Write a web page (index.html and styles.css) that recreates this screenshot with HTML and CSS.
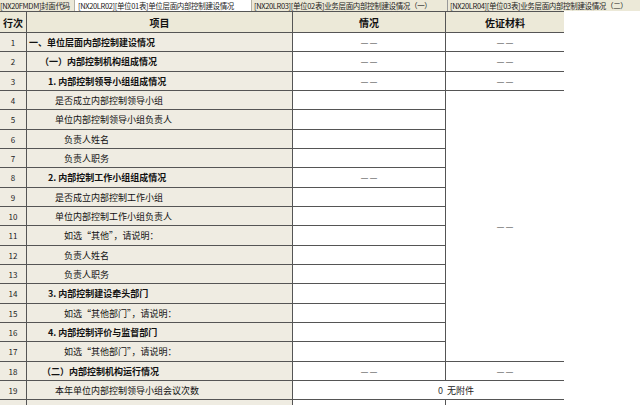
FILE: index.html
```html
<!DOCTYPE html>
<html>
<head>
<meta charset="utf-8">
<link rel="stylesheet" href="styles.css">
</head>
<body>
<div class="tabs">
  <div class="tab t1">[NX20FMDM]封面代码</div>
  <div class="tab t2 active">[NX20LR02][单位01表]单位层面内部控制建设情况</div>
  <div class="tab t3">[NX20LR03][单位02表]业务层面内部控制建设情况（一）</div>
  <div class="tab t4">[NX20LR04][单位03表]业务层面内部控制建设情况（二）</div>
</div>
<div class="sheet">
  <div class="h">行次</div><div class="h">项目</div><div class="h">情况</div><div class="h">佐证材料</div>

  <div class="n">1</div><div class="it b i0">一、单位层面内部控制建设情况</div><div class="v dash">——</div><div class="v dash">——</div>
  <div class="n">2</div><div class="it b i1">（一）内部控制机构组成情况</div><div class="v dash">——</div><div class="v dash">——</div>
  <div class="n">3</div><div class="it b i2">1. 内部控制领导小组组成情况</div><div class="v dash">——</div><div class="v dash">——</div>
  <div class="n">4</div><div class="it i3">是否成立内部控制领导小组</div><div class="v"></div><div class="v dash merged">——</div>
  <div class="n">5</div><div class="it i3">单位内部控制领导小组负责人</div><div class="v"></div>
  <div class="n">6</div><div class="it i4">负责人姓名</div><div class="v"></div>
  <div class="n">7</div><div class="it i4">负责人职务</div><div class="v"></div>
  <div class="n">8</div><div class="it b i2">2. 内部控制工作小组组成情况</div><div class="v dash">——</div>
  <div class="n">9</div><div class="it i3">是否成立内部控制工作小组</div><div class="v"></div>
  <div class="n">10</div><div class="it i3">单位内部控制工作小组负责人</div><div class="v"></div>
  <div class="n">11</div><div class="it i4">如选“其他”，请说明：</div><div class="v"></div>
  <div class="n">12</div><div class="it i4">负责人姓名</div><div class="v"></div>
  <div class="n">13</div><div class="it i4">负责人职务</div><div class="v"></div>
  <div class="n">14</div><div class="it b i2">3. 内部控制建设牵头部门</div><div class="v"></div>
  <div class="n">15</div><div class="it i4">如选“其他部门”，请说明：</div><div class="v"></div>
  <div class="n">16</div><div class="it b i2">4. 内部控制评价与监督部门</div><div class="v"></div>
  <div class="n">17</div><div class="it i4">如选“其他部门”，请说明：</div><div class="v"></div>
  <div class="n">18</div><div class="it b i1b">（二）内部控制机构运行情况</div><div class="v dash">——</div><div class="v dash">——</div>
  <div class="n">19</div><div class="it i3">本年单位内部控制领导小组会议次数</div><div class="v span2"><span class="num">0</span><span class="att">无附件</span></div>
  <div class="n"></div><div class="it"></div><div class="v"></div><div class="v"></div>
</div>
</body>
</html>
```
FILE: styles.css
```css
html, body {
  margin: 0;
  padding: 0;
  background: #ffffff;
  overflow: hidden;
  width: 640px;
  height: 405px;
}
body {
  font-family: "Noto Sans CJK SC", "Noto Sans", sans-serif;
  color: #000;
}
.tabs {
  display: flex;
  height: 11px;
  background: #ece9d8;
  overflow: hidden;
  white-space: nowrap;
  font-size: 7.5px;
  letter-spacing: -0.35px;
  line-height: 11px;
  color: #222;
}
.tab {
  overflow: hidden;
  box-sizing: border-box;
  padding-left: 2px;
}
.t1 { width: 74px; padding-left: 0; }
.t2 { width: 178px; padding-left: 3px; }
.t3 { width: 196px; border-right: 1px solid #999; padding-left: 2px; }
.t4 { flex: 1; padding-left: 2px; }
.tab.active {
  background: #ffffff;
  border-left: 1px solid #b5b2a5;
  border-right: 1px solid #b5b2a5;
}
.sheet {
  display: grid;
  grid-template-columns: 26px 265px 152px 118px;
  grid-template-rows: 20px 18px 19px 18px 18px 19px 18px 18px 19px 18px 18px 19px 18px 18px 19px 18px 18px 19px 18px 18px 19px;
  gap: 1px;
  background: #555;
  border-top: 1px solid #555;
  border-right: 1px solid #555;
  width: 563px;
}
.sheet > div {
  background: #efece2;
  display: flex;
  align-items: center;
  white-space: nowrap;
  overflow: hidden;
}
.sheet > .h {
  background: #ece9d8;
  justify-content: center;
  font-weight: bold;
  font-size: 10px;
  color: #111;
}
.sheet > .n {
  justify-content: center;
  font-size: 8px;
  color: #222;
}
.sheet > .it {
  font-size: 9px;
  color: #111;
}
.it.b { font-weight: bold; }
.i0 { padding-left: 2px; }
.i1 { padding-left: 13px; }
.i1b { padding-left: 15px; }
.i2 { padding-left: 21px; }
.i3 { padding-left: 28px; }
.i4 { padding-left: 37px; }
.sheet > .v {
  background: #ffffff;
  justify-content: center;
  font-size: 9px;
  color: #444;
}
.sheet > .dash {
  font-family: "Liberation Sans", sans-serif;
  font-size: 7px;
  letter-spacing: 2px;
  padding-left: 2px;
  color: #333;
}
.merged {
  grid-column: 4;
  grid-row: span 14;
}
.span2 {
  grid-column: span 2;
  justify-content: flex-start !important;
}
.num {
  width: 150px;
  text-align: right;
  color: #333;
}
.att {
  margin-left: 4px;
  color: #222;
}
```
